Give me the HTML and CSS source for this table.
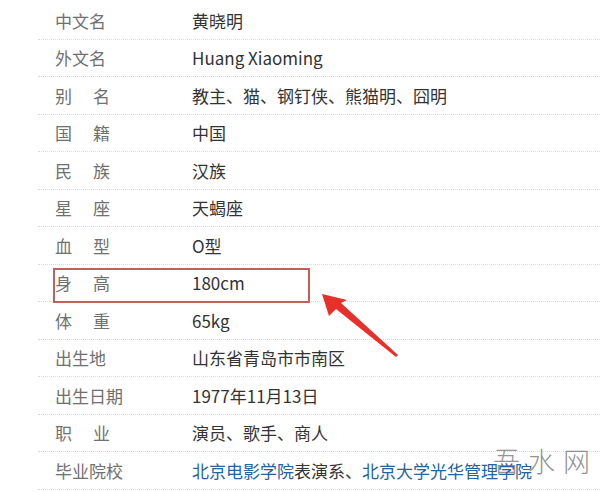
FILE: index.html
```html
<!DOCTYPE html>
<html lang="zh">
<head>
<meta charset="utf-8">
<link rel="stylesheet" href="styles.css">
</head>
<body>
<div class="page">
  <dl class="info">
    <div class="row"><dt>中文名</dt><dd>黄晓明</dd></div>
    <div class="row"><dt>外文名</dt><dd>Huang Xiaoming</dd></div>
    <div class="row"><dt><span class="sp"><i>别</i><i>名</i></span></dt><dd>教主、猫、钢钉侠、熊猫明、囧明</dd></div>
    <div class="row"><dt><span class="sp"><i>国</i><i>籍</i></span></dt><dd>中国</dd></div>
    <div class="row"><dt><span class="sp"><i>民</i><i>族</i></span></dt><dd>汉族</dd></div>
    <div class="row"><dt><span class="sp"><i>星</i><i>座</i></span></dt><dd>天蝎座</dd></div>
    <div class="row"><dt><span class="sp"><i>血</i><i>型</i></span></dt><dd>O型</dd></div>
    <div class="row"><dt><span class="sp"><i>身</i><i>高</i></span></dt><dd>180cm</dd></div>
    <div class="row"><dt><span class="sp"><i>体</i><i>重</i></span></dt><dd>65kg</dd></div>
    <div class="row"><dt>出生地</dt><dd>山东省青岛市市南区</dd></div>
    <div class="row"><dt>出生日期</dt><dd>1977年11月13日</dd></div>
    <div class="row"><dt><span class="sp"><i>职</i><i>业</i></span></dt><dd>演员、歌手、商人</dd></div>
    <div class="row"><dt>毕业院校</dt><dd><a class="lk">北京电影学院</a>表演系、<a class="lk">北京大学光华管理学院</a></dd></div>
  </dl>
  <div class="highlight"></div>
  <svg class="arrow" width="100" height="80" viewBox="0 0 100 80">
    <path d="M2 3 L27 9 L21 12 L78 64 L76 66 L16 18 L9 25 Z" fill="#e8302a"/>
  </svg>
  <div class="watermark"><span>吾</span><span>水</span><span>网</span></div>
</div>
</body>
</html>
```

FILE: styles.css
```css
html, body {
  margin: 0;
  padding: 0;
  background: #fff;
}
.page {
  position: relative;
  width: 600px;
  height: 492px;
  overflow: hidden;
  font-family: "Noto Sans CJK SC", "Noto Sans", sans-serif;
  font-size: 17px;
}
.info {
  margin: 2px 0 0 38px;
  padding: 0;
}
.row {
  display: flex;
  align-items: center;
  height: 37.5px;
  box-sizing: border-box;
  border-bottom: 1px dotted #dcdcdc;
}
dt {
  box-sizing: border-box;
  width: 154px;
  padding-left: 17px;
  color: #707070;
  flex: none;
}
dd {
  margin: 0;
  color: #333;
  white-space: nowrap;
}
.sp {
  display: inline-flex;
  justify-content: space-between;
  width: 55px;
}
.sp i {
  font-style: normal;
}
.lk {
  color: #2462a0;
}
.highlight {
  position: absolute;
  left: 53px;
  top: 268px;
  width: 257px;
  height: 35px;
  box-sizing: border-box;
  border: 2px solid #c4605b;
}
.arrow {
  position: absolute;
  left: 320px;
  top: 291px;
}
.watermark {
  position: absolute;
  left: 493px;
  top: 441px;
  display: flex;
  gap: 8px;
  font-size: 27px;
  color: rgba(100, 100, 100, 0.7);
  font-family: "Noto Sans CJK SC", sans-serif;
  font-weight: 300;
}
```
